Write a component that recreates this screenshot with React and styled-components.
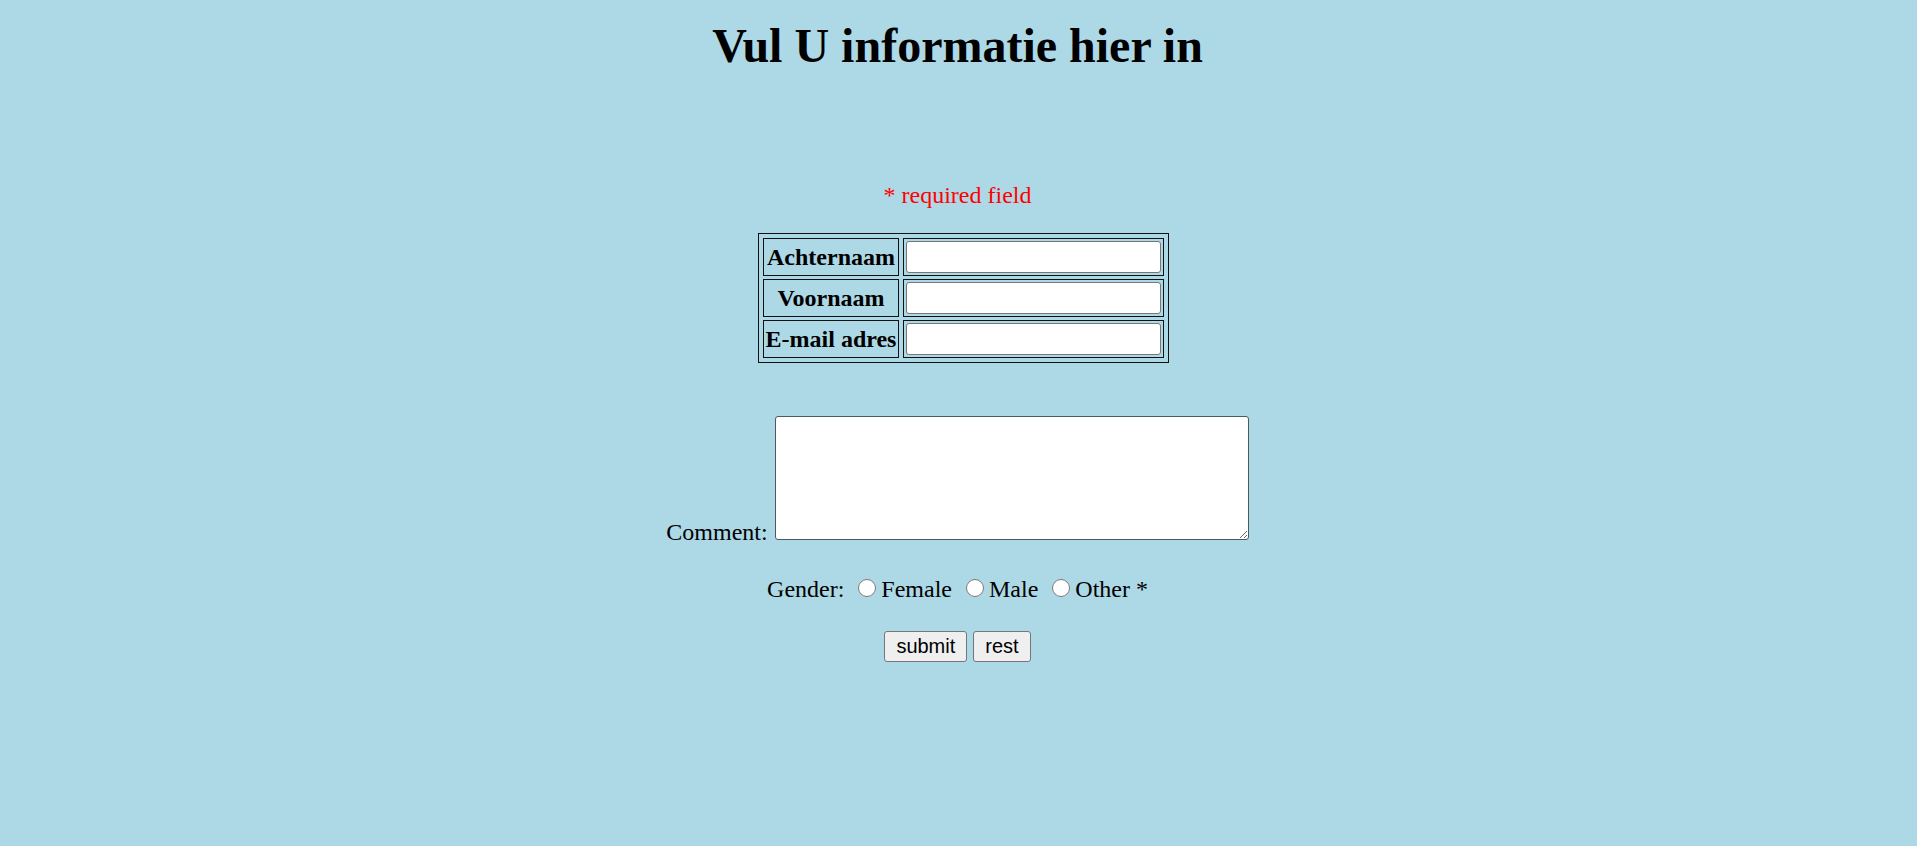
import React from "react";
import styled, { createGlobalStyle } from "styled-components";

const GlobalStyle = createGlobalStyle`
  html, body {
    margin: 0;
    padding: 0;
    background: #add8e6;
  }
  body {
    font-family: "Liberation Serif", "Times New Roman", serif;
    font-size: 24px;
    color: #000;
  }
`;

const Page = styled.div`
  display: flex;
  flex-direction: column;
  align-items: center;
  min-height: 846px;
  padding-right: 2px;
`;

const Title = styled.h1`
  margin: 22px 0 0;
  font-size: 48px;
  line-height: 48px;
  font-weight: bold;
  text-align: center;
`;

const Required = styled.p`
  margin: 111px 0 0;
  line-height: 28px;
  color: #ff0000;
`;

const TableWrap = styled.div`
  margin-top: 24px;
  padding-left: 12px;
`;

const InfoTable = styled.table`
  border: 1px solid #111;
  border-spacing: 4px 3px;
  padding: 1px 0;
`;

const LabelCell = styled.th`
  border: 1px solid #111;
  padding: 2px 2px;
  font-size: 24px;
  font-weight: bold;
  text-align: center;
  white-space: nowrap;
`;

const FieldCell = styled.td`
  border: 1px solid #111;
  padding: 2px;
`;

const TextInput = styled.input`
  display: block;
  box-sizing: border-box;
  width: 255px;
  height: 32px;
  margin: 0;
  border: 1px solid #767676;
  border-radius: 3px;
  background: #fff;
  font-size: 20px;
`;

const CommentRow = styled.div`
  display: flex;
  align-items: flex-end;
  gap: 7px;
  margin-top: 53px;
`;

const CommentLabel = styled.span`
  line-height: 16px;
`;

const CommentBox = styled.textarea`
  display: block;
  box-sizing: border-box;
  width: 474px;
  height: 124px;
  margin: 0;
  border: 1px solid #4a5a5e;
  border-radius: 3px;
  background: #fff;
  font-size: 20px;
`;

const GenderRow = styled.div`
  margin-top: 35px;
  line-height: 28px;
  white-space: pre;
`;

const Radio = styled.input`
  width: 18px;
  height: 18px;
  margin: 0 5px 0 8px;
  vertical-align: baseline;
`;

const ButtonRow = styled.div`
  display: flex;
  gap: 6px;
  margin-top: 28px;
`;

const Button = styled.button`
  font-family: "Liberation Sans", Arial, sans-serif;
  font-size: 20px;
  line-height: 23px;
  padding: 3px 11px;
  border: 1px solid #767676;
  border-radius: 3px;
  background: #efefef;
  color: #000;
`;

const fields = ["Achternaam", "Voornaam", "E-mail adres"];

export default function App() {
  return (
    <>
      <GlobalStyle />
      <Page>
        <Title>Vul U informatie hier in</Title>
        <Required>* required field</Required>
        <TableWrap>
          <InfoTable>
            <tbody>
              {fields.map((f) => (
                <tr key={f}>
                  <LabelCell>{f}</LabelCell>
                  <FieldCell>
                    <TextInput type="text" />
                  </FieldCell>
                </tr>
              ))}
            </tbody>
          </InfoTable>
        </TableWrap>
        <CommentRow>
          <CommentLabel>Comment:</CommentLabel>
          <CommentBox />
        </CommentRow>
        <GenderRow>
          Gender: <Radio type="radio" name="gender" />Female <Radio type="radio" name="gender" />Male <Radio type="radio" name="gender" />Other *
        </GenderRow>
        <ButtonRow>
          <Button type="submit">submit</Button>
          <Button type="reset">rest</Button>
        </ButtonRow>
      </Page>
    </>
  );
}
